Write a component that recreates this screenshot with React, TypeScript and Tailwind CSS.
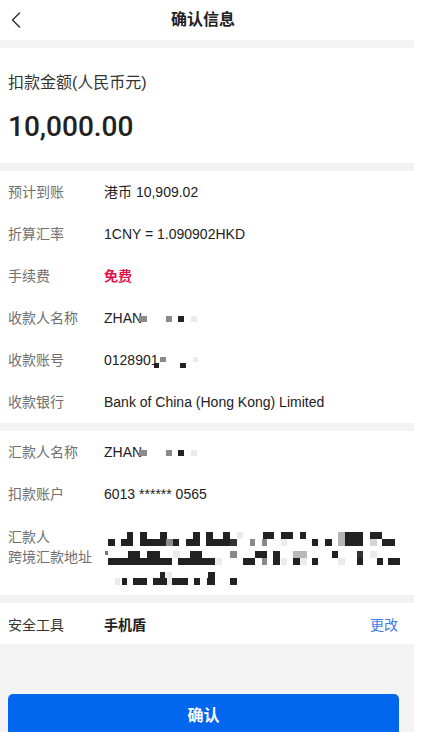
import React from "react";

type Cell = [number, number, number, number, string];

const K = "#222222";
const G = "#8a8a8a";
const L = "#ebebeb";

// mosaic cells in page coordinates (x1, x2, y1, y2, colour)
const addressCells: Cell[] = [
  // line 1 upper
  [127, 133, 532, 539, K], [140, 147, 532, 539, K], [160, 167, 532, 539, K],
  [193, 200, 532, 539, K], [206, 213, 532, 539, K], [223, 230, 532, 539, K],
  [237, 243, 532, 539, L], [263, 274, 532, 539, K], [281, 293, 532, 539, K],
  [300, 306, 532, 539, K], [338, 345, 532, 539, "#b5b5b5"], [345, 363, 532, 539, K],
  [370, 382, 532, 539, K],
  // line 1 lower
  [108, 115, 539, 546, K], [121, 133, 539, 546, K], [140, 166, 539, 546, K],
  [166, 173, 539, 546, G], [173, 179, 539, 546, K], [186, 200, 539, 546, K],
  [206, 230, 539, 546, K], [230, 237, 539, 546, "#333"], [250, 255, 539, 546, G],
  [262, 267, 539, 546, G], [281, 287, 539, 546, L], [312, 318, 539, 546, K],
  [325, 332, 539, 546, K], [338, 345, 539, 546, "#b5b5b5"], [345, 363, 539, 546, K],
  [370, 377, 539, 546, "#d5d5d5"], [382, 395, 539, 546, K],
  // line 2 upper
  [105, 108, 551, 555, "#777"], [128, 140, 551, 558, K], [147, 160, 551, 558, K],
  [173, 180, 551, 558, L], [190, 202, 551, 558, K], [230, 237, 551, 558, G],
  [255, 267, 551, 558, K], [273, 280, 551, 558, K], [293, 307, 551, 558, "#b8b8b8"],
  [332, 338, 551, 558, K], [357, 363, 551, 558, "#333"], [370, 377, 551, 558, L],
  // line 2 lower
  [108, 172, 558, 565, K], [178, 215, 558, 565, K], [215, 222, 558, 565, L],
  [243, 255, 558, 565, K], [262, 267, 558, 565, G], [273, 280, 558, 565, K],
  [281, 287, 558, 565, L], [293, 300, 558, 565, K], [300, 307, 558, 565, L],
  [312, 318, 558, 565, K], [338, 345, 558, 565, L], [357, 363, 558, 565, K],
  [377, 383, 558, 565, K], [388, 400, 558, 565, K],
  // line 3 upper
  [160, 165, 572, 578, K], [165, 172, 572, 578, L], [208, 215, 572, 578, K],
  // line 3 lower
  [115, 120, 578, 585, L], [122, 127, 578, 585, K], [133, 147, 578, 585, K],
  [153, 167, 578, 585, K], [167, 172, 578, 585, L], [172, 188, 578, 585, K],
  [194, 200, 578, 585, K], [207, 215, 578, 585, K], [230, 237, 578, 585, K],
];

function Mosaic({ cells, ox, oy, w, h }: { cells: Cell[]; ox: number; oy: number; w: number; h: number }) {
  return (
    <svg width={w} height={h} viewBox={`0 0 ${w} ${h}`} className="block shrink-0">
      {cells.map(([x1, x2, y1, y2, c], i) => (
        <rect key={i} x={x1 - ox} y={y1 - oy} width={x2 - x1} height={y2 - y1} fill={c} />
      ))}
    </svg>
  );
}

const nameCells: Cell[] = [
  [1, 9, 5, 11, G],
  [28, 34, 5, 11, G],
  [40, 46, 5, 11, K],
  [53, 59, 5, 11, L],
];

const accountCells: Cell[] = [
  [1, 6, 10, 15, K],
  [7, 13, 4, 9, G],
  [27, 33, 10, 15, K],
  [40, 45, 4, 9, L],
];

function Row({ label, children }: { label: string; children: React.ReactNode }) {
  return (
    <div className="flex h-[42px] items-center pl-2">
      <div className="w-[96px] shrink-0 text-[14px] text-[#707070]">{label}</div>
      <div className="flex items-center text-[14px] text-[#222]">{children}</div>
    </div>
  );
}

function Gap() {
  return <div className="h-[8px] bg-[#f3f3f3]" />;
}

function Masked({ text, cells, shift }: { text: string; cells: Cell[]; shift: string }) {
  return (
    <>
      <span>{text}</span>
      <span className={shift}>
        <Mosaic cells={cells} ox={0} oy={0} w={62} h={16} />
      </span>
    </>
  );
}

export default function App() {
  return (
    <div className="min-h-screen bg-white font-['Liberation_Sans','Noto_Sans_CJK_SC',sans-serif]">
      <div className="w-[414px] h-[732px] overflow-hidden bg-[#f3f3f3]">
        {/* 顶部导航 */}
        <header className="h-[40px] bg-white grid grid-cols-[1fr_auto_1fr] items-center pr-2">
          <svg width="12" height="18" viewBox="0 0 12 18" className="ml-[10px]">
            <polyline points="9.5,2 2.5,9 9.5,16" fill="none" stroke="#333" strokeWidth="1.5" strokeLinecap="round" strokeLinejoin="round" />
          </svg>
          <h1 className="text-[16px] font-bold text-[#222]">确认信息</h1>
          <div />
        </header>
        <Gap />

        {/* 金额 */}
        <section className="bg-white h-[115px] pl-2 pt-[24px]">
          <p className="text-[16px] leading-[22px] text-[#333]">扣款金额(人民币元)</p>
          <p className="mt-[16px] text-[28px] leading-[34px] font-medium text-[#222] font-['Roboto','Noto_Sans_CJK_SC',sans-serif]">
            10,000.00
          </p>
        </section>
        <Gap />

        {/* 收款信息 */}
        <section className="bg-white">
          <Row label="预计到账">
            <span>港币 10,909.02</span>
          </Row>
          <Row label="折算汇率">
            <span>1CNY = 1.090902HKD</span>
          </Row>
          <Row label="手续费">
            <span className="font-bold text-[#e3124b]">免费</span>
          </Row>
          <Row label="收款人名称">
            <Masked text="ZHAN" cells={nameCells} shift="-ml-[4px] mt-[2px]" />
          </Row>
          <Row label="收款账号">
            <Masked text="0128901" cells={accountCells} shift="-ml-[6px] mt-[2px]" />
          </Row>
          <Row label="收款银行">
            <span>Bank of China (Hong Kong) Limited</span>
          </Row>
        </section>
        <Gap />

        {/* 汇款信息 */}
        <section className="bg-white">
          <Row label="汇款人名称">
            <Masked text="ZHAN" cells={nameCells} shift="-ml-[4px] mt-[2px]" />
          </Row>
          <Row label="扣款账户">
            <span>6013 ****** 0565</span>
          </Row>
          <div className="flex h-[80px] items-start pl-2 pt-[12px]">
            <div className="w-[96px] shrink-0 text-[14px] leading-[20px] text-[#707070]">
              汇款人
              <br />
              跨境汇款地址
            </div>
            <Mosaic cells={addressCells} ox={104} oy={527} w={300} h={60} />
          </div>
        </section>
        <Gap />

        {/* 安全工具 */}
        <section className="bg-white h-[41px] flex items-center pl-2 pr-4 pt-1">
          <div className="w-[96px] shrink-0 text-[14px] text-[#333]">安全工具</div>
          <div className="flex-1 text-[14px] font-bold text-[#222]">手机盾</div>
          <button className="text-[14px] text-[#3b7de9]">更改</button>
        </section>

        <div className="mt-[50px] ml-2 mr-[15px]">
          <button className="w-full h-[44px] rounded-[5px] bg-[#0366ee] text-white text-[16px] font-bold">
            确认
          </button>
        </div>
      </div>
    </div>
  );
}
